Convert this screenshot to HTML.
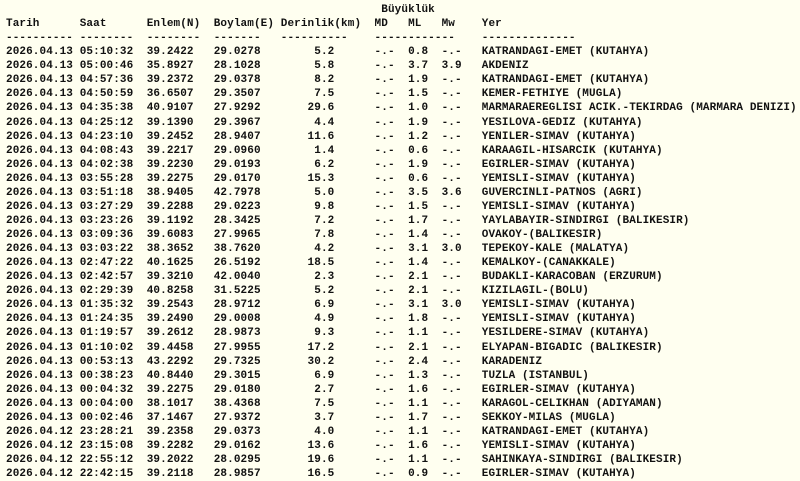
<!DOCTYPE html>
<html><head><meta charset="utf-8"><style>
html,body{margin:0;padding:0;background:#fffff0;width:800px;height:480px;overflow:hidden}
pre{margin:0;position:absolute;left:6px;top:3px;font-family:"Liberation Mono",monospace;font-size:11px;letter-spacing:0.1px;line-height:14.07px;font-weight:bold;color:#111;white-space:pre}
</style></head><body><pre>                                                        Büyüklük
Tarih      Saat      Enlem(N)  Boylam(E) Derinlik(km)  MD   ML   Mw    Yer
---------- --------  --------  -------   ----------    ------------    --------------
2026.04.13 05:10:32  39.2422   29.0278        5.2      -.-  0.8  -.-   KATRANDAGI-EMET (KUTAHYA)
2026.04.13 05:00:46  35.8927   28.1028        5.8      -.-  3.7  3.9   AKDENIZ
2026.04.13 04:57:36  39.2372   29.0378        8.2      -.-  1.9  -.-   KATRANDAGI-EMET (KUTAHYA)
2026.04.13 04:50:59  36.6507   29.3507        7.5      -.-  1.5  -.-   KEMER-FETHIYE (MUGLA)
2026.04.13 04:35:38  40.9107   27.9292       29.6      -.-  1.0  -.-   MARMARAEREGLISI ACIK.-TEKIRDAG (MARMARA DENIZI)
2026.04.13 04:25:12  39.1390   29.3967        4.4      -.-  1.9  -.-   YESILOVA-GEDIZ (KUTAHYA)
2026.04.13 04:23:10  39.2452   28.9407       11.6      -.-  1.2  -.-   YENILER-SIMAV (KUTAHYA)
2026.04.13 04:08:43  39.2217   29.0960        1.4      -.-  0.6  -.-   KARAAGIL-HISARCIK (KUTAHYA)
2026.04.13 04:02:38  39.2230   29.0193        6.2      -.-  1.9  -.-   EGIRLER-SIMAV (KUTAHYA)
2026.04.13 03:55:28  39.2275   29.0170       15.3      -.-  0.6  -.-   YEMISLI-SIMAV (KUTAHYA)
2026.04.13 03:51:18  38.9405   42.7978        5.0      -.-  3.5  3.6   GUVERCINLI-PATNOS (AGRI)
2026.04.13 03:27:29  39.2288   29.0223        9.8      -.-  1.5  -.-   YEMISLI-SIMAV (KUTAHYA)
2026.04.13 03:23:26  39.1192   28.3425        7.2      -.-  1.7  -.-   YAYLABAYIR-SINDIRGI (BALIKESIR)
2026.04.13 03:09:36  39.6083   27.9965        7.8      -.-  1.4  -.-   OVAKOY-(BALIKESIR)
2026.04.13 03:03:22  38.3652   38.7620        4.2      -.-  3.1  3.0   TEPEKOY-KALE (MALATYA)
2026.04.13 02:47:22  40.1625   26.5192       18.5      -.-  1.4  -.-   KEMALKOY-(CANAKKALE)
2026.04.13 02:42:57  39.3210   42.0040        2.3      -.-  2.1  -.-   BUDAKLI-KARACOBAN (ERZURUM)
2026.04.13 02:29:39  40.8258   31.5225        5.2      -.-  2.1  -.-   KIZILAGIL-(BOLU)
2026.04.13 01:35:32  39.2543   28.9712        6.9      -.-  3.1  3.0   YEMISLI-SIMAV (KUTAHYA)
2026.04.13 01:24:35  39.2490   29.0008        4.9      -.-  1.8  -.-   YEMISLI-SIMAV (KUTAHYA)
2026.04.13 01:19:57  39.2612   28.9873        9.3      -.-  1.1  -.-   YESILDERE-SIMAV (KUTAHYA)
2026.04.13 01:10:02  39.4458   27.9955       17.2      -.-  2.1  -.-   ELYAPAN-BIGADIC (BALIKESIR)
2026.04.13 00:53:13  43.2292   29.7325       30.2      -.-  2.4  -.-   KARADENIZ
2026.04.13 00:38:23  40.8440   29.3015        6.9      -.-  1.3  -.-   TUZLA (ISTANBUL)
2026.04.13 00:04:32  39.2275   29.0180        2.7      -.-  1.6  -.-   EGIRLER-SIMAV (KUTAHYA)
2026.04.13 00:04:00  38.1017   38.4368        7.5      -.-  1.1  -.-   KARAGOL-CELIKHAN (ADIYAMAN)
2026.04.13 00:02:46  37.1467   27.9372        3.7      -.-  1.7  -.-   SEKKOY-MILAS (MUGLA)
2026.04.12 23:28:21  39.2358   29.0373        4.0      -.-  1.1  -.-   KATRANDAGI-EMET (KUTAHYA)
2026.04.12 23:15:08  39.2282   29.0162       13.6      -.-  1.6  -.-   YEMISLI-SIMAV (KUTAHYA)
2026.04.12 22:55:12  39.2022   28.0295       19.6      -.-  1.1  -.-   SAHINKAYA-SINDIRGI (BALIKESIR)
2026.04.12 22:42:15  39.2118   28.9857       16.5      -.-  0.9  -.-   EGIRLER-SIMAV (KUTAHYA)
</pre></body></html>
